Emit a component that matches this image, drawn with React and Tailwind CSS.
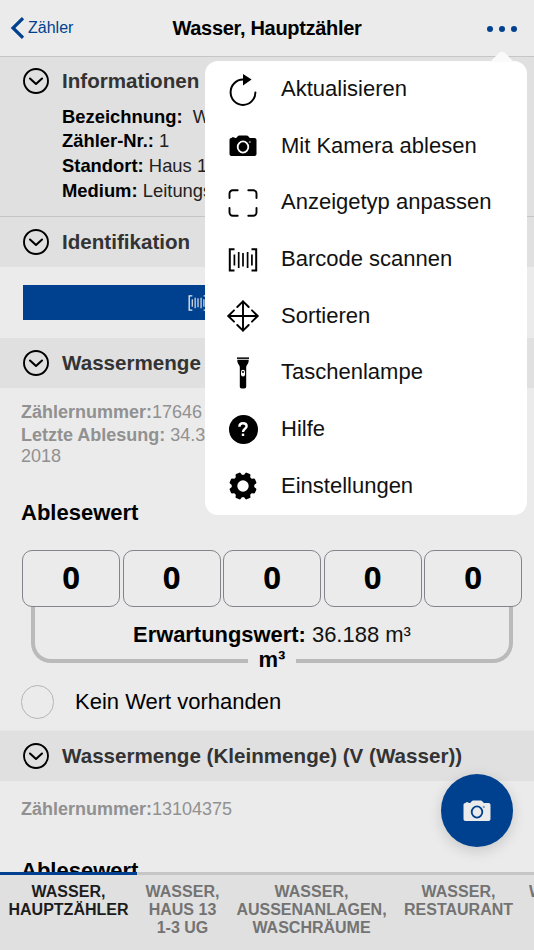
import React from 'react';

const BarcodeIcon = ({ className }) => (
  <svg viewBox="0 0 30 24" className={className} fill="none" stroke="currentColor">
    <path d="M6.5 1.2H1.8v21.4h4.7M23.5 1.2h4.7v21.4h-4.7" strokeWidth="2" />
    <path d="M6.4 6.5v11M10.7 4v16M15 5v13.5M19.6 4v16M23.9 6.5v11" strokeWidth="1.7" />
  </svg>
);

const CameraIcon = ({ className, ring }) => (
  <svg viewBox="0 0 28 22" className={className}>
    <path d="M2.8 3V2.2h2.7V3h1.7l1.3-1.6C9 .8 9.6.5 10.4.5h7.2c.8 0 1.4.3 1.9.9L20.8 3h4.7c1.2 0 2 .8 2 2v14c0 1.2-.8 2-2 2h-23c-1.2 0-2-.8-2-2V5c0-1.1.7-1.9 2-2z" fill="currentColor" />
    <ellipse cx="14" cy="12" rx="5.3" ry="5.6" fill="none" className={ring} strokeWidth="1.8" />
    <circle cx="20.8" cy="7" r=".7" className={ring} fill="none" strokeWidth=".5" />
  </svg>
);

const RefreshIcon = () => (
  <svg viewBox="0 0 32 34" className="w-8 h-[34px]">
    <path d="M16 6.5A12.4 12.7 0 1 0 28.4 19.5" fill="none" stroke="black" strokeWidth="2" strokeLinecap="round" />
    <path d="M16 1l8.6 5.5L16 12.5z" fill="black" />
  </svg>
);

const FrameIcon = () => (
  <svg viewBox="0 0 30 28" className="w-[30px] h-7" fill="none" stroke="black" strokeWidth="1.9" strokeLinecap="round">
    <path d="M1.5 9V4.5a3.2 3.2 0 0 1 3.2-3.2h5M20.3 1.3h5a3.2 3.2 0 0 1 3.2 3.2V9M28.5 19v4.5a3.2 3.2 0 0 1-3.2 3.2h-5M9.7 26.7h-5a3.2 3.2 0 0 1-3.2-3.2V19" />
  </svg>
);

const MoveIcon = () => (
  <svg viewBox="0 0 32 32" className="w-8 h-8" fill="none" stroke="black" strokeWidth="1.9" strokeLinecap="round" strokeLinejoin="round">
    <path d="M16 1.5v29M1.5 16h29" />
    <path d="M10.3 7L16 1.3 21.7 7M10.3 25l5.7 5.7 5.7-5.7M7 10.3L1.3 16 7 21.7M25 10.3l5.7 5.7-5.7 5.7" />
  </svg>
);

const TorchIcon = () => (
  <svg viewBox="0 0 14 32" className="w-3.5 h-8">
    <path d="M1 .4h12v1.5H1z" fill="black" />
    <path d="M1.3 2.7h11.4c0 3.2-.8 4-1.7 5.3-.6 1-.8 1.5-.8 2.5v19c0 1.3-.7 2-2 2H5.8c-1.3 0-2-.7-2-2v-19c0-1-.2-1.5-.8-2.5-.9-1.3-1.7-2.1-1.7-5.3z" fill="black" />
    <rect x="5" y="12.8" width="4" height="6.8" rx="2" fill="white" />
    <circle cx="7" cy="15" r="1" fill="black" />
  </svg>
);

const HelpIcon = () => (
  <div className="w-[29px] h-[29px] rounded-full bg-black text-white flex items-center justify-center">
    <svg viewBox="0 0 10 15" className="w-2.5 h-[15px]" fill="none" stroke="currentColor" strokeWidth="2.4">
      <path d="M1.4 4.7C1.4 2.6 2.8 1.3 5 1.3s3.6 1.2 3.6 3C8.6 6.8 5 6.8 5 10" />
      <path d="M5 11.6v2.4" />
    </svg>
  </div>
);

const GearIcon = () => (
  <svg viewBox="-14 -14 28 28" className="w-7 h-7">
    <circle r="8.5" fill="none" stroke="black" strokeWidth="5.6" />
    {[22.5, 67.5, 112.5, 157.5, 202.5, 247.5, 292.5, 337.5].map((a) => (
      <path key={a} d="M-3.6-9.5L-2.7-13q.3-.7 1-.7h3.4q.7 0 1 .7L3.6-9.5z" fill="black" transform={`rotate(${a})`} />
    ))}
  </svg>
);

const menuItems = [
  { label: 'Aktualisieren', icon: <RefreshIcon /> },
  { label: 'Mit Kamera ablesen', icon: <CameraIcon className="w-7 h-[22px]" ring="stroke-white" /> },
  { label: 'Anzeigetyp anpassen', icon: <FrameIcon /> },
  { label: 'Barcode scannen', icon: <BarcodeIcon className="w-[30px] h-6" /> },
  { label: 'Sortieren', icon: <MoveIcon /> },
  { label: 'Taschenlampe', icon: <TorchIcon /> },
  { label: 'Hilfe', icon: <HelpIcon /> },
  { label: 'Einstellungen', icon: <GearIcon /> },
];

const tabs = [
  { lines: ['WASSER,', 'HAUPTZÄHLER'], active: true, width: 'w-[137px]' },
  { lines: ['WASSER,', 'HAUS 13', '1-3 UG'], width: 'w-[91px]' },
  { lines: ['WASSER,', 'AUSSENANLAGEN,', 'WASCHRÄUME'], width: 'w-[167px]' },
  { lines: ['WASSER,', 'RESTAURANT'], width: 'w-[127px]' },
  { lines: ['WASSER,'], width: 'w-[88px]' },
];

const details = [
  { label: 'Bezeichnung:', value: '\u00a0Wasser' },
  { label: 'Zähler-Nr.:', value: '1' },
  { label: 'Standort:', value: 'Haus 13' },
  { label: 'Medium:', value: 'Leitungswasser' },
];

const SectionTitle = ({ children }) => (
  <div className="flex items-center gap-[13px] h-[50px] pl-[23px] bg-[#e0e0e0]">
    <svg viewBox="0 0 26 26" className="w-[26px] h-[26px] shrink-0" fill="none" stroke="black" strokeLinecap="round" strokeLinejoin="round">
      <circle cx="13" cy="13" r="12" strokeWidth="1.9" />
      <path d="M7 10.5l6 5.5 6-5.5" strokeWidth="2.1" />
    </svg>
    <h2 className="text-[20.6px] font-bold text-[#333] whitespace-nowrap">{children}</h2>
  </div>
);

const App = () => {
  return (
    <div className="relative flex flex-col w-[534px] h-[950px] overflow-hidden bg-[#ebebeb] text-black font-['Liberation_Sans',Arial,sans-serif]">
      {/* Header */}
      <header className="grid grid-cols-[1fr_auto_1fr] items-center h-[57px] shrink-0 border-b border-[#c6c6c6] pl-[10px] pr-[17px]">
        <div className="flex items-center gap-1 text-[#00418f]">
          <svg viewBox="0 0 14 22" className="w-3.5 h-[22px]" fill="none" stroke="currentColor" strokeWidth="3.2">
            <path d="M13 1.2L3 11l10 9.8" />
          </svg>
          <span className="text-base">Zähler</span>
        </div>
        <h1 className="pl-[7px] text-[20px] font-bold tracking-[-0.3px]">Wasser, Hauptzähler</h1>
        <div className="flex justify-end gap-1.5 pt-0.5">
          <span className="w-1.5 h-1.5 rounded-full bg-[#00418f]" />
          <span className="w-1.5 h-1.5 rounded-full bg-[#00418f]" />
          <span className="w-1.5 h-1.5 rounded-full bg-[#00418f]" />
        </div>
      </header>

      <main className="flex-1 min-h-0 overflow-hidden">
        {/* Informationen */}
        <section className="h-[160px] -mt-px bg-[#e0e0e0] border-b border-[#c6c6c6] box-content">
          <SectionTitle>Informationen</SectionTitle>
          <div className="pl-[62px] -mt-[1.5px] text-[18.4px] leading-[24.9px] whitespace-nowrap">
            {details.map((d) => (
              <p key={d.label}>
                <span className="font-bold">{d.label}</span> <span className="text-[#222]">{d.value}</span>
              </p>
            ))}
          </div>
        </section>

        {/* Identifikation */}
        <SectionTitle>Identifikation</SectionTitle>
        <div className="h-[71px] px-[23px] pt-[18px]">
          <button className="flex items-center w-full h-[35px] pl-[165px] bg-[#00418f] text-[#ebebeb]">
            <BarcodeIcon className="w-5 h-4" />
          </button>
        </div>

        {/* Wassermenge */}
        <SectionTitle>Wassermenge</SectionTitle>
        <div className="h-[342px] pl-[21px] pt-[14px]">
          <div className="text-[18px] leading-[21px] text-[#919191]">
            <p className="mb-[2px]"><b>Zählernummer:</b>17646</p>
            <p><b>Letzte Ablesung:</b> 34.3<br />2018</p>
          </div>
          <h3 className="mt-[33px] text-[22px] leading-[26px] font-bold">Ablesewert</h3>

          <div className="flex gap-[2.5px] mt-6 ml-px w-[500px]">
            {[0, 0, 0, 0, 0].map((digit, i) => (
              <div key={i} className="flex flex-1 items-center justify-center h-[57px] pb-0.5 rounded-[10px] border border-[#83838b] font-['Open_Sans','Noto_Sans',sans-serif] text-[31px] font-bold">
                {digit}
              </div>
            ))}
          </div>

          {/* Bracket with the unit in its lower edge */}
          <div className="relative ml-[10px] w-[482px] h-[56px] rounded-b-[20px] border-4 border-t-0 border-[#bababa] text-[22px] text-center">
            <p className="pt-[11px] leading-[34px]"><b className="text-[21.9px]">Erwartungswert:</b> <span className="text-[#111]">36.188 m³</span></p>
            <span className="absolute left-1/2 -translate-x-1/2 -bottom-[16px] w-[48px] leading-[30px] bg-[#ebebeb] font-bold">m³</span>
          </div>

          <label className="flex items-center gap-[21px] mt-[22px]">
            <span className="w-[33px] h-[34px] rounded-full border border-[#b5b5b5]" />
            <span className="-mt-[2px] text-[22px]">Kein Wert vorhanden</span>
          </label>
        </div>

        {/* Kleinmenge */}
        <div className="border-t border-[#e6e6e6]">
          <SectionTitle>Wassermenge (Kleinmenge) (V (Wasser))</SectionTitle>
        </div>
        <div className="pl-[21px] pt-[18px]">
          <p className="text-[18px] leading-[21px] text-[#919191]"><b>Zählernummer:</b>13104375</p>
          <h3 className="mt-[38px] text-[22px] leading-[26px] font-bold">Ablesewert</h3>
        </div>
      </main>

      {/* Tabs */}
      <nav className="flex shrink-0 h-[78px] w-[610px] bg-[#e0e0e0] text-base leading-[18px] font-bold text-center">
        {tabs.map((tab) => (
          <div
            key={tab.lines.join(' ')}
            className={`${tab.width} shrink-0 border-t-[3px] pt-[8px] ${
              tab.active ? 'border-[#00418f] text-[#1c1c1c]' : 'border-[#c6c6c6] text-[#737373]'
            }`}
          >
            {tab.lines.map((line) => (
              <p key={line}>{line}</p>
            ))}
          </div>
        ))}
      </nav>

      {/* Camera button */}
      <button className="absolute left-[441px] top-[774px] flex items-center justify-center w-[72px] h-[73px] rounded-full bg-[#00418f] text-[#ebebeb] shadow-[0_4px_14px_rgba(0,0,0,0.15)]">
        <CameraIcon className="w-7 h-[22px]" ring="stroke-[#00418f]" />
      </button>

      {/* Options menu */}
      <div className="absolute left-[205px] top-[61px] w-[322px] h-[454px] rounded-[13px] bg-white">
        <svg viewBox="0 0 24 11" className="absolute right-[13px] -top-[10px] w-6 h-[11px]">
          <path d="M0 11L9 2q3-3 6 0l9 9z" fill="#fafafa" />
        </svg>
        <ul className="-mt-px">
          {menuItems.map((item) => (
            <li key={item.label} className="flex items-center h-[56.7px]">
              <span className="flex justify-center items-center w-[76px] pt-[2.5px]">{item.icon}</span>
              <span className="text-[22px] text-[#111] whitespace-nowrap">{item.label}</span>
            </li>
          ))}
        </ul>
      </div>
    </div>
  );
};

export default App;
